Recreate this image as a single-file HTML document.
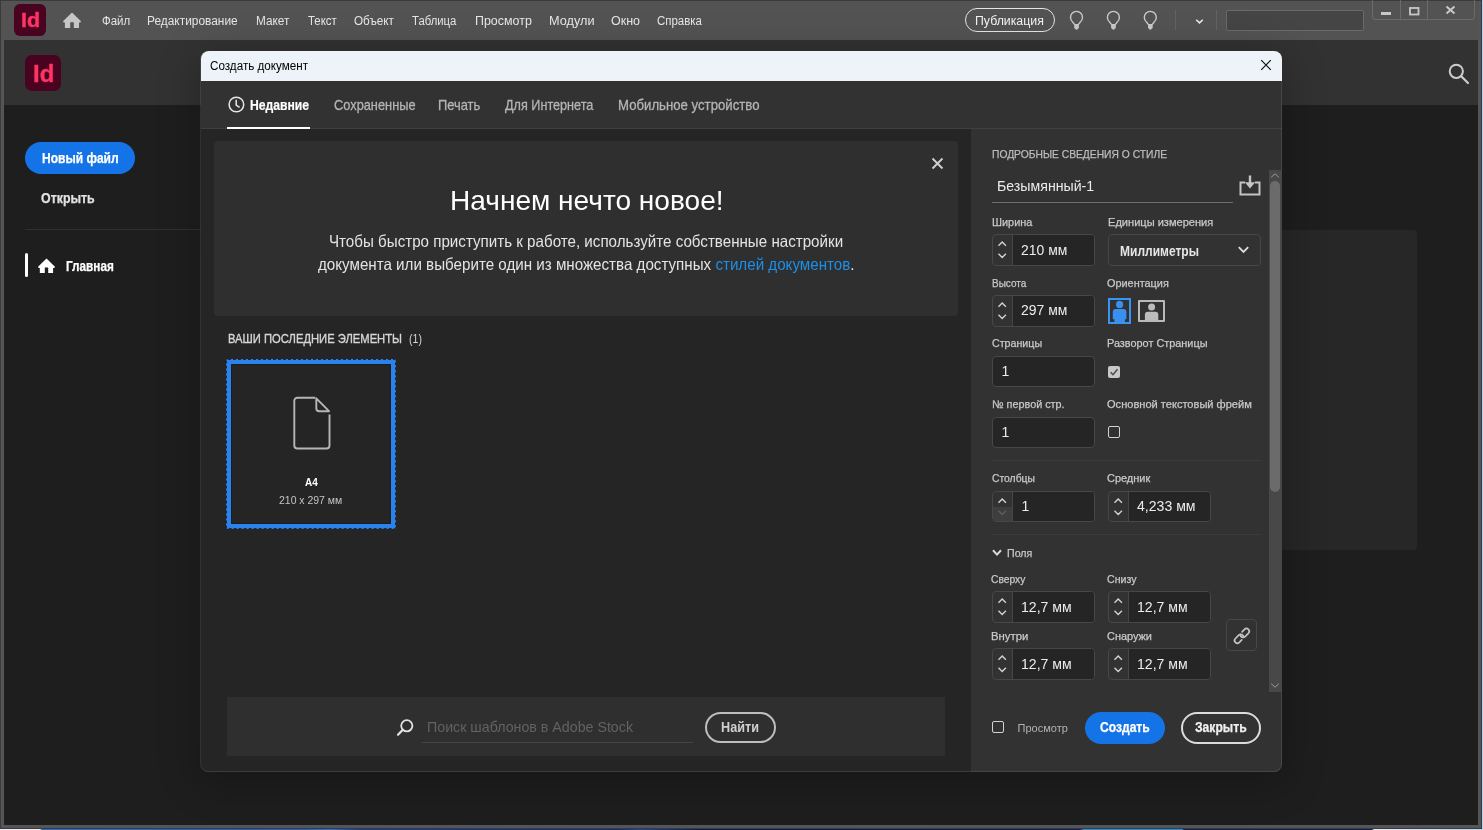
<!DOCTYPE html>
<html lang="ru">
<head>
<meta charset="utf-8">
<title>Создать документ</title>
<style>
html,body{margin:0;padding:0;background:#1e1e1e;}
body{width:1483px;height:830px;overflow:hidden;font-family:"Liberation Sans",sans-serif;}
#app{position:relative;width:1483px;height:830px;overflow:hidden;background:#1e1e1e;}
#app div,#app svg,#app span.t{position:absolute;box-sizing:border-box;}
span.t{white-space:nowrap;transform-origin:0 50%;font-family:"Liberation Sans",sans-serif;}
/* desktop strip visible under the window */
.desk{left:0;top:0;width:1483px;height:830px;background:linear-gradient(90deg,#e9eef5 0,#e9eef5 40px,#1b6fd6 42px,#1a62c8 300px,#1d74dc 330px,#0d3f9e 360px,#0a2f86 620px,#1149a8 640px,#061b5a 700px,#081f63 1080px,#1f8fe8 1084px,#1f8fe8 1182px,#0a1f5c 1184px,#0a1f5c 1372px,#dfeaf6 1374px,#b6d3ee 1483px);}
/* application window */
.win{left:0;top:0;width:1482px;height:829px;background:#555555;border:1px solid #3b3b3b;}
.menubar{left:0;top:0;width:1477px;height:39px;background:#535353;}
.bar2{left:3px;top:39px;width:1474px;height:65px;background:#323232;}
.main{left:3px;top:104px;width:1474px;height:720px;background:#1e1e1e;}
.logo{background:#49021f;border-radius:6px;}
.pill{border:1px solid #e6e6e6;border-radius:13px;}
.sep{width:1px;background:#636363;}
.srch{background:#454545;border:1px solid #6a6a6a;border-radius:2px;}
.wctl{border:1px solid #6b6b6b;border-top:none;border-radius:0 0 4px 4px;}
.wctl i{position:absolute;top:0;width:1px;height:19px;background:#6b6b6b;}
/* home screen */
.btn-blue{background:#1473e6;border-radius:16px;}
.hr{height:1px;background:#303030;}
.selbar{background:#fff;border-radius:2px;}
.card{background:#272727;border-radius:4px;}
/* dialog */
.dlg-shadow{border-radius:8px;box-shadow:0 8px 40px 4px rgba(0,0,0,.24);}
.dlg{left:201px;top:51px;width:1081px;height:721px;border-radius:8px;overflow:hidden;background:#323232;}
.dlg-title{left:0;top:0;width:1081px;height:30px;background:#eef3fa;}
.tabs{left:0;top:30px;width:1081px;height:48px;background:#323232;border-bottom:1px solid #3f3f3f;}
.tab-ul{background:#fff;height:2px;}
.lpane{left:0;top:78px;width:770px;height:643px;background:#252525;}
.rpane{left:770px;top:78px;width:311px;height:643px;background:#323232;}
.dlg-edge{left:200px;top:51px;width:1082px;height:721px;border-radius:8px;border:1px solid rgba(255,255,255,.10);border-top:none;}
.box{background:#2f2f2f;border-radius:4px;}
.thumb{border:5px solid #2a82ec;border-radius:2px;background:#252525;}
.thumb .dots{left:-5px;top:-5px;right:-5px;bottom:-5px;border:1px dashed #1e2a3a;border-radius:2px;}
.thumb::after{content:'';position:absolute;left:0;top:0;right:0;bottom:0;border:1px solid #1c1c1c;border-radius:2px;}
.fld{background:#252525;border:1px solid #474747;border-radius:4px;}
.spin{background:#323232;border:1px solid #474747;border-radius:4px;}
.spin .v{left:19px;top:0;bottom:0;right:0;background:#252525;border-left:1px solid #474747;border-radius:0 3px 3px 0;}
.dd{border:1px solid #474747;border-radius:4px;background:#323232;}
.ul{height:1px;background:#6e6e6e;}
.div{height:1px;background:#3b3b3b;}
.cb{border:1.5px solid #d2d2d2;border-radius:2px;}
.cbx{background:#c9c9c9;border-radius:2px;}
.btn-out{border:2px solid #dcdcdc;border-radius:16px;}
.sb-track{background:#484848;}
.sb-thumb{background:#6b6b6b;border-radius:5px;}
#labels{left:0;top:0;width:1483px;height:830px;will-change:transform;}

</style>
</head>
<body>
<div id="app">
<div class="desk"></div>
<div class="win">
  <div class="menubar"></div>
  <div class="bar2"></div>
  <div class="main"></div>
</div>

<!-- menu bar -->
<div class="logo" style="left:14px;top:4px;width:32px;height:32px"></div>
<svg style="left:62px;top:12px" width="20" height="17" viewBox="0 0 20 17"><path d="M10 0.600 L19 9.200 L18.300 10.500 H17 V15.900 H11.800 V10.200 H8.200 V15.900 H2.900 V10.500 H1.700 L1 9.200 Z" fill="#c6c6c6"/></svg>
<div class="pill" style="left:965px;top:8px;width:90px;height:24px"></div>
<svg style="left:1068px;top:9px" width="100" height="23" viewBox="0 0 100 23"><g><path d="M6.700 15.600 L4.640 12.950 A6 6 0 1 1 12.360 12.950 L10.300 15.600" fill="none" stroke="#c9c9c9" stroke-width="1.400" stroke-linejoin="round"/><path d="M6.200 15.100 H10.900 V19.100 L8.550 21.050 L6.200 19.100 Z" fill="#c9c9c9"/></g><g transform="translate(36.900 0)"><path d="M6.700 15.600 L4.640 12.950 A6 6 0 1 1 12.360 12.950 L10.300 15.600" fill="none" stroke="#c9c9c9" stroke-width="1.400" stroke-linejoin="round"/><path d="M6.200 15.100 H10.900 V19.100 L8.550 21.050 L6.200 19.100 Z" fill="#c9c9c9"/></g><g transform="translate(73.800 0)"><path d="M6.700 15.600 L4.640 12.950 A6 6 0 1 1 12.360 12.950 L10.300 15.600" fill="none" stroke="#c9c9c9" stroke-width="1.400" stroke-linejoin="round"/><path d="M6.200 15.100 H10.900 V19.100 L8.550 21.050 L6.200 19.100 Z" fill="#c9c9c9"/></g></svg>
<div class="sep" style="left:1175px;top:10px;height:20px"></div>
<svg style="left:1194px;top:17px" width="11" height="8" viewBox="0 0 11 8"><path d="M2.200 2.800 L5.500 5.900 L8.800 2.800" fill="none" stroke="#ececec" stroke-width="1.500"/></svg>
<div class="sep" style="left:1216px;top:10px;height:20px"></div>
<div class="srch" style="left:1226px;top:10px;width:138px;height:21px"></div>
<div class="wctl" style="left:1372px;top:0;width:103px;height:20px"><i style="left:27px"></i><i style="left:54px"></i></div>
<svg style="left:1380px;top:4px" width="80" height="14" viewBox="0 0 80 14"><rect x="1" y="8" width="10" height="3" fill="#c8c8c8"/><rect x="30" y="4" width="8.500" height="6.500" fill="none" stroke="#c8c8c8" stroke-width="1.800"/><path d="M66.500 2.500 L74.500 9.500 M74.500 2.500 L66.500 9.500" stroke="#c8c8c8" stroke-width="2"/></svg>

<!-- home screen behind the dialog -->
<div class="logo" style="left:25px;top:55px;width:36px;height:36px;border-radius:7px"></div>
<svg style="left:1446px;top:61px" width="26" height="26" viewBox="0 0 26 26"><circle cx="10.300" cy="10.300" r="6.600" fill="none" stroke="#cdcdcd" stroke-width="2"/><path d="M15.200 15.200 L22 22" stroke="#cdcdcd" stroke-width="2.200" stroke-linecap="round"/></svg>
<div class="btn-blue" style="left:25px;top:142px;width:110px;height:32px"></div>
<div class="hr" style="left:25px;top:229px;width:176px"></div>
<div class="selbar" style="left:25px;top:253px;width:3px;height:24px"></div>
<svg style="left:37px;top:258px" width="19" height="16" viewBox="0 0 20 17"><path d="M10 0.600 L19 9.200 L18.300 10.500 H17 V15.900 H11.800 V10.200 H8.200 V15.900 H2.900 V10.500 H1.700 L1 9.200 Z" fill="#ffffff"/></svg>
<div class="card" style="left:1240px;top:230px;width:177px;height:320px"></div>

<!-- modal dialog -->
<div class="dlg-shadow" style="left:201px;top:51px;width:1081px;height:721px"></div>
<div class="dlg">
  <div class="dlg-title"></div>
  <div class="tabs"></div>
  <div class="tab-ul" style="left:26px;top:76px;width:83px"></div>
  <div class="lpane"></div>
  <div class="rpane"></div>
</div>
<div class="dlg-edge"></div>
<svg style="left:1259px;top:58px" width="14" height="14" viewBox="0 0 14 14"><path d="M2.200 2.200 L11.800 11.800 M11.800 2.200 L2.200 11.800" stroke="#111" stroke-width="1.200"/></svg>
<svg style="left:227px;top:95px" width="19" height="19" viewBox="0 0 19 19"><circle cx="9.400" cy="9.500" r="7.300" fill="none" stroke="#e8e8e8" stroke-width="1.500"/><path d="M9.200 4.800 V10 L12.600 12.300" fill="none" stroke="#e8e8e8" stroke-width="1.500"/></svg>

<!-- left pane -->
<div class="box" style="left:214px;top:141px;width:744px;height:175px"></div>
<svg style="left:930px;top:156px" width="15" height="15" viewBox="0 0 15 15"><path d="M2.500 2.500 L12.500 12.500 M12.500 2.500 L2.500 12.500" stroke="#cfcfcf" stroke-width="1.900"/></svg>
<div class="thumb" style="left:226px;top:359px;width:170px;height:170px"><div class="dots"></div></div>
<svg style="left:291px;top:395px" width="42" height="56" viewBox="0 0 42 56"><path d="M24.300 2.800 H6.300 a3 3 0 0 0 -3 3 V50.500 a3 3 0 0 0 3 3 H35.500 a3 3 0 0 0 3 -3 V19.500" fill="none" stroke="#b6b6b6" stroke-width="1.900"/><path d="M25.300 3.300 L38 16.200 H28.300 a3 3 0 0 1 -3 -3 Z" fill="none" stroke="#b6b6b6" stroke-width="1.900" stroke-linejoin="round"/></svg>
<div class="box" style="left:227px;top:697px;width:718px;height:59px;border-radius:0"></div>
<svg style="left:395px;top:717px" width="21" height="21" viewBox="0 0 21 21"><circle cx="11.800" cy="8.800" r="5.600" fill="none" stroke="#e2e2e2" stroke-width="1.800"/><path d="M7.800 12.800 L3 17.800" stroke="#e2e2e2" stroke-width="2.200" stroke-linecap="round"/></svg>
<div class="ul" style="left:422px;top:742px;width:271px;background:#464646"></div>
<div class="btn-out" style="left:705px;top:711.500px;width:71px;height:31px;border-color:#bdbdbd"></div>

<!-- right pane -->
<div class="ul" style="left:992px;top:202px;width:241px"></div>
<svg style="left:1238px;top:174px" width="24" height="23" viewBox="0 0 24 23"><path d="M7 8.500 H2.500 V20.500 H21.500 V8.500 H17" fill="none" stroke="#c4c4c4" stroke-width="2"/><path d="M12 1.500 V9" stroke="#c4c4c4" stroke-width="2.400"/><path d="M6.800 8.200 H17.200 L12 14.600 Z" fill="#c4c4c4"/></svg>
<div class="sb-track" style="left:1269px;top:170px;width:12px;height:522px"></div>
<div class="sb-thumb" style="left:1270px;top:181px;width:10px;height:311px"></div>
<svg style="left:1270px;top:172px" width="10" height="7" viewBox="0 0 10 7"><path d="M1.200 5.300 L5 1.800 L8.800 5.300" fill="none" stroke="#9a9a9a" stroke-width="1"/></svg>
<svg style="left:1270px;top:682px" width="10" height="7" viewBox="0 0 10 7"><path d="M1.200 1.700 L5 5.200 L8.800 1.700" fill="none" stroke="#9a9a9a" stroke-width="1"/></svg>

<div class="spin" style="left:992px;top:234px;width:103px;height:32px"><div class="v"></div><svg style="left:0;top:0" width="20" height="31" viewBox="0 0 20 31"><path d="M5.500 10.700 L9.200 7 L12.900 10.700 M5.500 18.700 L9.200 22.400 L12.900 18.700" fill="none" stroke="#d2d2d2" stroke-width="1.400"/></svg></div>
<div class="dd" style="left:1108px;top:234px;width:153px;height:32px"></div>
<svg style="left:1237px;top:245px" width="13" height="10" viewBox="0 0 13 10"><path d="M1.800 2.200 L6.500 7 L11.200 2.200" fill="none" stroke="#dedede" stroke-width="1.800"/></svg>
<div class="spin" style="left:992px;top:295px;width:103px;height:32px"><div class="v"></div><svg style="left:0;top:0" width="20" height="31" viewBox="0 0 20 31"><path d="M5.500 10.700 L9.200 7 L12.900 10.700 M5.500 18.700 L9.200 22.400 L12.900 18.700" fill="none" stroke="#d2d2d2" stroke-width="1.400"/></svg></div>
<div class="fld" style="left:992px;top:356px;width:103px;height:31px"></div>
<div class="fld" style="left:992px;top:417px;width:103px;height:31px"></div>
<div class="div" style="left:992px;top:460px;width:269px"></div>
<div class="spin" style="left:992px;top:491px;width:103px;height:31px"><div class="v"></div><div style="left:0;top:15px;width:19px;height:14px;background:#3e3e3e;border-radius:0 0 0 3px"></div><svg style="left:0;top:0" width="20" height="31" viewBox="0 0 20 31"><path d="M5.500 10.700 L9.200 7 L12.900 10.700" fill="none" stroke="#d2d2d2" stroke-width="1.400"/><path d="M5.500 18.700 L9.200 22.400 L12.900 18.700" fill="none" stroke="#5e5e5e" stroke-width="1.400"/></svg></div>
<div class="spin" style="left:1108px;top:491px;width:103px;height:31px"><div class="v"></div><svg style="left:0;top:0" width="20" height="31" viewBox="0 0 20 31"><path d="M5.500 10.700 L9.200 7 L12.900 10.700 M5.500 18.700 L9.200 22.400 L12.900 18.700" fill="none" stroke="#d2d2d2" stroke-width="1.400"/></svg></div>
<div class="div" style="left:992px;top:534px;width:269px"></div>
<div class="spin" style="left:992px;top:591px;width:103px;height:32px"><div class="v"></div><svg style="left:0;top:0" width="20" height="31" viewBox="0 0 20 31"><path d="M5.500 10.700 L9.200 7 L12.900 10.700 M5.500 18.700 L9.200 22.400 L12.900 18.700" fill="none" stroke="#d2d2d2" stroke-width="1.400"/></svg></div>
<div class="spin" style="left:1108px;top:591px;width:103px;height:32px"><div class="v"></div><svg style="left:0;top:0" width="20" height="31" viewBox="0 0 20 31"><path d="M5.500 10.700 L9.200 7 L12.900 10.700 M5.500 18.700 L9.200 22.400 L12.900 18.700" fill="none" stroke="#d2d2d2" stroke-width="1.400"/></svg></div>
<div class="spin" style="left:992px;top:648px;width:103px;height:32px"><div class="v"></div><svg style="left:0;top:0" width="20" height="31" viewBox="0 0 20 31"><path d="M5.500 10.700 L9.200 7 L12.900 10.700 M5.500 18.700 L9.200 22.400 L12.900 18.700" fill="none" stroke="#d2d2d2" stroke-width="1.400"/></svg></div>
<div class="spin" style="left:1108px;top:648px;width:103px;height:32px"><div class="v"></div><svg style="left:0;top:0" width="20" height="31" viewBox="0 0 20 31"><path d="M5.500 10.700 L9.200 7 L12.900 10.700 M5.500 18.700 L9.200 22.400 L12.900 18.700" fill="none" stroke="#d2d2d2" stroke-width="1.400"/></svg></div>
<div class="dd" style="left:1226px;top:619px;width:31px;height:32px"></div>

<!-- orientation icons -->
<div style="left:1108px;top:298px;width:23px;height:26px;border:2px solid #3a94f4"></div>
<svg style="left:1108px;top:298px" width="23" height="26" viewBox="0 0 23 26"><circle cx="11.600" cy="6.400" r="3.600" fill="#3a90ef"/><path d="M4.800 21.300 V14 a3 3 0 0 1 3 -3 h7.600 a3 3 0 0 1 3 3 V21.300 H16.900 V24.800 H6.400 V21.300 Z" fill="#3a90ef"/></svg>
<div style="left:1138px;top:300px;width:27px;height:22px;border:2px solid #b9b9b9;border-radius:1px"></div>
<svg style="left:1138px;top:300px" width="27" height="22" viewBox="0 0 27 22"><circle cx="13.600" cy="7.100" r="3.500" fill="#bcbcbc"/><path d="M6.900 20 V14.700 a3 3 0 0 1 3 -3 h7.400 a3 3 0 0 1 3 3 V20 Z" fill="#bcbcbc"/></svg>

<!-- checkboxes -->
<div class="cbx" style="left:1108px;top:366px;width:12px;height:12px"></div>
<svg style="left:1108px;top:366px" width="12" height="12" viewBox="0 0 12 12"><path d="M2.600 6.300 L5 8.700 L9.500 3.300" fill="none" stroke="#4a4a4a" stroke-width="1.500"/></svg>
<div class="cb" style="left:1108px;top:426px;width:12px;height:12px"></div>
<div class="cb" style="left:992px;top:721px;width:12px;height:12px"></div>

<!-- section chevron + link icon -->
<svg style="left:991px;top:548px" width="12" height="10" viewBox="0 0 12 10"><path d="M2 2.300 L6 6.600 L10 2.300" fill="none" stroke="#dcdcdc" stroke-width="2"/></svg>
<svg style="left:1231px;top:625px" width="22" height="22" viewBox="0 0 22 22"><g transform="translate(10.900 10.900) rotate(-45)" fill="none" stroke="#c4c4c4" stroke-width="1.700" stroke-linecap="round"><path d="M3 -2.750 L6.400 -2.750 A2.750 2.750 0 0 1 6.400 2.750 L1.700 2.750 A2.750 2.750 0 0 1 -0.240 -1.940"/><path d="M3 -2.750 L6.400 -2.750 A2.750 2.750 0 0 1 6.400 2.750 L1.700 2.750 A2.750 2.750 0 0 1 -0.240 -1.940" transform="rotate(180)"/></g></svg>

<!-- buttons -->
<div class="btn-blue" style="left:1085px;top:712px;width:80px;height:32px"></div>
<div class="btn-out" style="left:1181px;top:712px;width:80px;height:32px"></div>

<!-- text labels -->
<div id="labels">
<span class="t" style="left:20.80px;top:7.00px;font-size:20.5px;line-height:26px;color:#ff3366;font-weight:700;transform:scaleX(1.0451);-webkit-text-stroke:0.4px #ff3366;">Id</span>
<span class="t" style="left:102.00px;top:14.00px;font-size:12px;line-height:15px;color:#e4e4e4;transform:scaleX(0.9554);">Файл</span>
<span class="t" style="left:146.50px;top:14.00px;font-size:12px;line-height:15px;color:#e4e4e4;transform:scaleX(0.9924);">Редактирование</span>
<span class="t" style="left:255.80px;top:14.00px;font-size:12px;line-height:15px;color:#e4e4e4;transform:scaleX(0.9833);">Макет</span>
<span class="t" style="left:308.30px;top:14.00px;font-size:12px;line-height:15px;color:#e4e4e4;transform:scaleX(0.9497);">Текст</span>
<span class="t" style="left:354.00px;top:14.00px;font-size:12px;line-height:15px;color:#e4e4e4;transform:scaleX(0.9761);">Объект</span>
<span class="t" style="left:412.30px;top:14.00px;font-size:12px;line-height:15px;color:#e4e4e4;transform:scaleX(0.9434);">Таблица</span>
<span class="t" style="left:474.70px;top:14.00px;font-size:12px;line-height:15px;color:#e4e4e4;transform:scaleX(1.0365);">Просмотр</span>
<span class="t" style="left:549.40px;top:14.00px;font-size:12px;line-height:15px;color:#e4e4e4;transform:scaleX(1.0602);">Модули</span>
<span class="t" style="left:611.00px;top:14.00px;font-size:12px;line-height:15px;color:#e4e4e4;transform:scaleX(1.0398);">Окно</span>
<span class="t" style="left:657.00px;top:14.00px;font-size:12px;line-height:15px;color:#e4e4e4;transform:scaleX(0.9559);">Справка</span>
<span class="t" style="left:974.60px;top:14.00px;font-size:12px;line-height:15px;color:#f0f0f0;transform:scaleX(1.0263);">Публикация</span>
<span class="t" style="left:33.10px;top:60.00px;font-size:23.3px;line-height:29px;color:#ff3366;font-weight:700;transform:scaleX(1.0248);-webkit-text-stroke:0.4px #ff3366;">Id</span>
<span class="t" style="left:41.60px;top:149.00px;font-size:14px;line-height:18px;color:#ffffff;font-weight:700;transform:scaleX(0.8581);-webkit-text-stroke:0.25px #ffffff;">Новый файл</span>
<span class="t" style="left:41.00px;top:189.00px;font-size:14px;line-height:18px;color:#e2e2e2;font-weight:700;transform:scaleX(0.8842);-webkit-text-stroke:0.25px #e2e2e2;">Открыть</span>
<span class="t" style="left:66.20px;top:257.00px;font-size:14px;line-height:18px;color:#ffffff;font-weight:700;transform:scaleX(0.8413);-webkit-text-stroke:0.25px #ffffff;">Главная</span>
<span class="t" style="left:210.20px;top:59.00px;font-size:12px;line-height:15px;color:#000000;transform:scaleX(0.9720);">Создать документ</span>
<span class="t" style="left:250.30px;top:96.00px;font-size:14.5px;line-height:18px;color:#ffffff;font-weight:700;transform:scaleX(0.8387);-webkit-text-stroke:0.2px #ffffff;">Недавние</span>
<span class="t" style="left:334.00px;top:96.00px;font-size:14.5px;line-height:18px;color:#b4b4b4;transform:scaleX(0.8831);-webkit-text-stroke:0.3px #b4b4b4;">Сохраненные</span>
<span class="t" style="left:438.30px;top:96.00px;font-size:14.5px;line-height:18px;color:#b4b4b4;transform:scaleX(0.8887);-webkit-text-stroke:0.3px #b4b4b4;">Печать</span>
<span class="t" style="left:505.00px;top:96.00px;font-size:14.5px;line-height:18px;color:#b4b4b4;transform:scaleX(0.8723);-webkit-text-stroke:0.3px #b4b4b4;">Для Интернета</span>
<span class="t" style="left:618.40px;top:96.00px;font-size:14.5px;line-height:18px;color:#b4b4b4;transform:scaleX(0.9095);-webkit-text-stroke:0.3px #b4b4b4;">Мобильное устройство</span>
<span class="t" style="left:450.00px;top:184.00px;font-size:27.5px;line-height:34px;color:#ffffff;transform:scaleX(1.0207);">Начнем нечто новое!</span>
<span class="t" style="left:328.70px;top:231.00px;font-size:16.5px;line-height:21px;color:#e4e4e4;transform:scaleX(0.9182);">Чтобы быстро приступить к работе, используйте собственные настройки</span>
<span class="t" style="left:317.90px;top:254.00px;font-size:16.5px;line-height:21px;color:#e4e4e4;transform:scaleX(0.9186);">документа или выберите один из множества доступных <span style="color:#1b90ea">стилей документов</span>.</span>
<span class="t" style="left:227.50px;top:331.00px;font-size:12.5px;line-height:16px;color:#d6d6d6;transform:scaleX(0.8973);-webkit-text-stroke:0.35px #d6d6d6;">ВАШИ ПОСЛЕДНИЕ ЭЛЕМЕНТЫ</span>
<span class="t" style="left:409.20px;top:331.00px;font-size:12.5px;line-height:16px;color:#d6d6d6;transform:scaleX(0.8442);">(1)</span>
<span class="t" style="left:305.00px;top:475.00px;font-size:11.5px;line-height:14px;color:#ffffff;font-weight:700;transform:scaleX(0.8706);">A4</span>
<span class="t" style="left:279.30px;top:493.00px;font-size:11.5px;line-height:14px;color:#c4c4c4;transform:scaleX(0.9089);">210 x 297 мм</span>
<span class="t" style="left:426.90px;top:718.00px;font-size:14.5px;line-height:18px;color:#626262;transform:scaleX(0.9809);">Поиск шаблонов в Adobe Stock</span>
<span class="t" style="left:721.30px;top:718.00px;font-size:14px;line-height:18px;color:#d0d0d0;font-weight:700;transform:scaleX(0.9031);">Найти</span>
<span class="t" style="left:992.00px;top:147.00px;font-size:11px;line-height:14px;color:#bcbcbc;transform:scaleX(0.9346);-webkit-text-stroke:0.25px #bcbcbc;">ПОДРОБНЫЕ СВЕДЕНИЯ О СТИЛЕ</span>
<span class="t" style="left:997.30px;top:177.00px;font-size:14.5px;line-height:18px;color:#ececec;transform:scaleX(0.9761);">Безымянный-1</span>
<span class="t" style="left:991.80px;top:215.00px;font-size:11px;line-height:14px;color:#c9c9c9;transform:scaleX(0.9909);-webkit-text-stroke:0.25px #c9c9c9;">Ширина</span>
<span class="t" style="left:1107.70px;top:215.00px;font-size:11px;line-height:14px;color:#c9c9c9;transform:scaleX(1.0060);-webkit-text-stroke:0.25px #c9c9c9;">Единицы измерения</span>
<span class="t" style="left:1021.30px;top:241.00px;font-size:14px;line-height:18px;color:#ececec;transform:scaleX(0.9959);">210 мм</span>
<span class="t" style="left:1119.60px;top:242.00px;font-size:14px;line-height:18px;color:#e6e6e6;font-weight:700;transform:scaleX(0.8578);">Миллиметры</span>
<span class="t" style="left:991.70px;top:276.00px;font-size:11px;line-height:14px;color:#c9c9c9;transform:scaleX(0.9084);-webkit-text-stroke:0.25px #c9c9c9;">Высота</span>
<span class="t" style="left:1107.40px;top:276.00px;font-size:11px;line-height:14px;color:#c9c9c9;transform:scaleX(0.9895);-webkit-text-stroke:0.25px #c9c9c9;">Ориентация</span>
<span class="t" style="left:1021.30px;top:301.00px;font-size:14px;line-height:18px;color:#ececec;transform:scaleX(0.9959);">297 мм</span>
<span class="t" style="left:991.50px;top:336.00px;font-size:11px;line-height:14px;color:#c9c9c9;transform:scaleX(0.9699);-webkit-text-stroke:0.25px #c9c9c9;">Страницы</span>
<span class="t" style="left:1107.40px;top:336.00px;font-size:11px;line-height:14px;color:#c9c9c9;transform:scaleX(0.9894);-webkit-text-stroke:0.25px #c9c9c9;">Разворот Страницы</span>
<span class="t" style="left:1001.50px;top:362.00px;font-size:14px;line-height:18px;color:#ececec;">1</span>
<span class="t" style="left:991.50px;top:397.00px;font-size:11px;line-height:14px;color:#c9c9c9;transform:scaleX(0.9836);-webkit-text-stroke:0.25px #c9c9c9;">№ первой стр.</span>
<span class="t" style="left:1106.50px;top:397.00px;font-size:11px;line-height:14px;color:#c9c9c9;transform:scaleX(1.0061);-webkit-text-stroke:0.25px #c9c9c9;">Основной текстовый фрейм</span>
<span class="t" style="left:1001.50px;top:423.00px;font-size:14px;line-height:18px;color:#ececec;">1</span>
<span class="t" style="left:991.50px;top:471.00px;font-size:11px;line-height:14px;color:#c9c9c9;transform:scaleX(0.9394);-webkit-text-stroke:0.25px #c9c9c9;">Столбцы</span>
<span class="t" style="left:1107.40px;top:471.00px;font-size:11px;line-height:14px;color:#c9c9c9;transform:scaleX(0.9956);-webkit-text-stroke:0.25px #c9c9c9;">Средник</span>
<span class="t" style="left:1021.60px;top:497.00px;font-size:14px;line-height:18px;color:#ececec;">1</span>
<span class="t" style="left:1137.00px;top:497.00px;font-size:14px;line-height:18px;color:#ececec;transform:scaleX(1.0055);">4,233 мм</span>
<span class="t" style="left:1006.80px;top:546.00px;font-size:11px;line-height:14px;color:#c9c9c9;transform:scaleX(0.9667);-webkit-text-stroke:0.25px #c9c9c9;">Поля</span>
<span class="t" style="left:991.10px;top:572.00px;font-size:11px;line-height:14px;color:#c9c9c9;transform:scaleX(0.9331);-webkit-text-stroke:0.25px #c9c9c9;">Сверху</span>
<span class="t" style="left:1107.10px;top:572.00px;font-size:11px;line-height:14px;color:#c9c9c9;transform:scaleX(0.9642);-webkit-text-stroke:0.25px #c9c9c9;">Снизу</span>
<span class="t" style="left:1021.20px;top:598.00px;font-size:14px;line-height:18px;color:#ececec;transform:scaleX(1.0055);">12,7 мм</span>
<span class="t" style="left:1137.20px;top:598.00px;font-size:14px;line-height:18px;color:#ececec;transform:scaleX(1.0055);">12,7 мм</span>
<span class="t" style="left:991.10px;top:629.00px;font-size:11px;line-height:14px;color:#c9c9c9;transform:scaleX(1.0301);-webkit-text-stroke:0.25px #c9c9c9;">Внутри</span>
<span class="t" style="left:1107.10px;top:629.00px;font-size:11px;line-height:14px;color:#c9c9c9;transform:scaleX(0.9919);-webkit-text-stroke:0.25px #c9c9c9;">Снаружи</span>
<span class="t" style="left:1021.20px;top:655.00px;font-size:14px;line-height:18px;color:#ececec;transform:scaleX(1.0055);">12,7 мм</span>
<span class="t" style="left:1137.20px;top:655.00px;font-size:14px;line-height:18px;color:#ececec;transform:scaleX(1.0055);">12,7 мм</span>
<span class="t" style="left:1017.60px;top:721.00px;font-size:11px;line-height:14px;color:#b2b2b2;">Просмотр</span>
<span class="t" style="left:1100.20px;top:718.00px;font-size:14px;line-height:18px;color:#ffffff;font-weight:700;transform:scaleX(0.8632);-webkit-text-stroke:0.25px #ffffff;">Создать</span>
<span class="t" style="left:1195.00px;top:718.00px;font-size:14px;line-height:18px;color:#f0f0f0;font-weight:700;transform:scaleX(0.8665);-webkit-text-stroke:0.25px #f0f0f0;">Закрыть</span>
</div>
</div>
</body>
</html>
